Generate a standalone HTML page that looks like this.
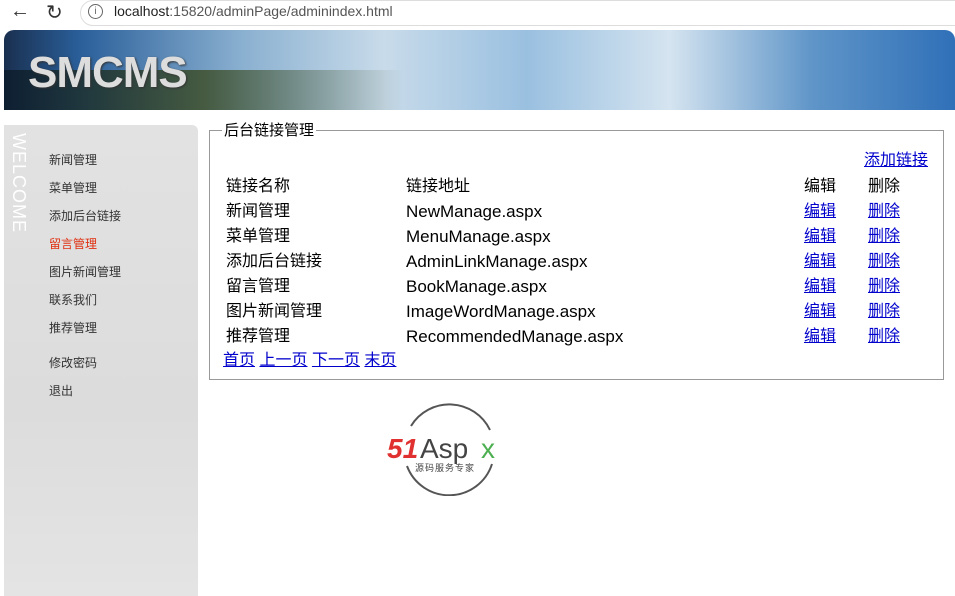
<!DOCTYPE html>
<html><head><meta charset="utf-8"><style>
body{margin:0;width:955px;height:596px;overflow:hidden;background:#fff;font-family:"Liberation Sans","Noto Sans CJK SC",sans-serif;position:relative}
.abs{position:absolute;white-space:nowrap}
.bar{position:absolute;left:0;top:0;width:955px;height:28px;background:#fff}
.url{position:absolute;left:80px;top:0;width:900px;height:24px;border:1px solid #ddd;border-radius:13px;background:#fff}
.banner{position:absolute;left:4px;top:30px;width:951px;height:80px;border-radius:10px 10px 0 0;
background:linear-gradient(90deg,#1a3050 0%,#2a5f9a 8%,#8ab0d0 25%,#c8dbea 40%,#9ac0e0 55%,#d5e4f0 70%,#5f95c8 85%,#3070b8 100%);overflow:hidden}
.banner .d{position:absolute;left:0;top:40px;width:400px;height:40px;background:linear-gradient(90deg,#0a1a2a,#3a4a20 50%,rgba(100,120,60,0));opacity:.8}
.smcms{position:absolute;left:24px;top:18px;font:bold 44px "Liberation Sans",sans-serif;color:#ddd;text-shadow:1px 1px 2px #333;letter-spacing:-1px}
.side{position:absolute;left:4px;top:125px;width:194px;height:471px;background:linear-gradient(180deg,#e2e2e2,#dcdcdc 60%,#e4e4e4);border-radius:0 6px 0 0}
.wel{position:absolute;left:8px;top:133px;writing-mode:vertical-rl;color:#fff;font:18px "Liberation Sans",sans-serif;letter-spacing:1px}
.m{position:absolute;left:49px;font-size:12px;color:#333;line-height:14px}
fieldset{position:absolute;left:209px;top:121px;width:735px;height:259px;margin:0;padding:0;border:1px solid #999;box-sizing:border-box}
legend{font-size:15px;margin-left:12px;padding:0 2px;line-height:18px;position:relative;top:1px}
.t{font-size:16px;color:#000;line-height:20px}
.e{font-size:17px}
a{color:#00c;text-decoration:underline}
</style></head><body>
<div class="bar">
<div class="abs" style="left:10px;top:0;font-size:20px;color:#333">&#8592;</div>
<div class="abs" style="left:46px;top:0;font-size:20px;color:#333">&#8635;</div>
<div class="url"></div>
<div class="abs" style="left:88px;top:4px;width:13px;height:13px;border:1px solid #666;border-radius:50%;font-size:10px;text-align:center;line-height:13px;color:#666">i</div>
<div class="abs" style="left:114px;top:3px;font-size:14px;color:#222">localhost<span style="color:#555">:15820/adminPage/adminindex.html</span></div>
</div>
<div class="banner"><div class="d"></div><div class="smcms">SMCMS</div></div>
<div class="side"></div>
<div class="wel">WELCOME</div>
<div class="m" style="top:153px">新闻管理</div>
<div class="m" style="top:181px">菜单管理</div>
<div class="m" style="top:209px">添加后台链接</div>
<div class="m" style="top:237px;color:#e03010">留言管理</div>
<div class="m" style="top:265px">图片新闻管理</div>
<div class="m" style="top:293px">联系我们</div>
<div class="m" style="top:321px">推荐管理</div>
<div class="m" style="top:356px">修改密码</div>
<div class="m" style="top:384px">退出</div>
<fieldset><legend>后台链接管理</legend></fieldset>
<a class="abs t" style="left:864px;top:151px;color:#00c">添加链接</a>
<div class="abs t" style="left:226px;top:177px">链接名称</div>
<div class="abs t" style="left:406px;top:177px">链接地址</div>
<div class="abs t" style="left:804px;top:177px">编辑</div>
<div class="abs t" style="left:868px;top:177px">删除</div>

<div class="abs t" style="left:226px;top:202px">新闻管理</div><div class="abs t e" style="left:406px;top:202px">NewManage.aspx</div><a class="abs t" style="left:804px;top:202px;color:#00c">编辑</a><a class="abs t" style="left:868px;top:202px;color:#00c">删除</a>
<div class="abs t" style="left:226px;top:227px">菜单管理</div><div class="abs t e" style="left:406px;top:227px">MenuManage.aspx</div><a class="abs t" style="left:804px;top:227px;color:#00c">编辑</a><a class="abs t" style="left:868px;top:227px;color:#00c">删除</a>
<div class="abs t" style="left:226px;top:252px">添加后台链接</div><div class="abs t e" style="left:406px;top:252px">AdminLinkManage.aspx</div><a class="abs t" style="left:804px;top:252px;color:#00c">编辑</a><a class="abs t" style="left:868px;top:252px;color:#00c">删除</a>
<div class="abs t" style="left:226px;top:277px">留言管理</div><div class="abs t e" style="left:406px;top:277px">BookManage.aspx</div><a class="abs t" style="left:804px;top:277px;color:#00c">编辑</a><a class="abs t" style="left:868px;top:277px;color:#00c">删除</a>
<div class="abs t" style="left:226px;top:302px">图片新闻管理</div><div class="abs t e" style="left:406px;top:302px">ImageWordManage.aspx</div><a class="abs t" style="left:804px;top:302px;color:#00c">编辑</a><a class="abs t" style="left:868px;top:302px;color:#00c">删除</a>
<div class="abs t" style="left:226px;top:327px">推荐管理</div><div class="abs t e" style="left:406px;top:327px">RecommendedManage.aspx</div><a class="abs t" style="left:804px;top:327px;color:#00c">编辑</a><a class="abs t" style="left:868px;top:327px;color:#00c">删除</a>
<div class="abs t" style="left:223px;top:351px"><a>首页</a> <a>上一页</a> <a>下一页</a> <a>末页</a></div>

<svg class="abs" style="left:385px;top:400px" width="130" height="96" viewBox="0 0 130 96">
<path d="M26 26 A45 45 0 0 1 105 30" fill="none" stroke="#555" stroke-width="2"/>
<path d="M22 66 A45 45 0 0 0 107 64" fill="none" stroke="#555" stroke-width="2"/>
<text x="2" y="58" font-family="Liberation Sans" font-weight="bold" font-style="italic" font-size="28" fill="#e03030">51</text>
<text x="35" y="58" font-family="Liberation Sans" font-size="28" fill="#444">Asp</text>
<text x="96" y="58" font-family="Liberation Sans" font-size="28" fill="#4caf50">x</text>
<text x="30" y="71" font-family="Noto Sans CJK SC" font-size="9" fill="#444" letter-spacing="1">源码服务专家</text>
</svg>
</body></html>
